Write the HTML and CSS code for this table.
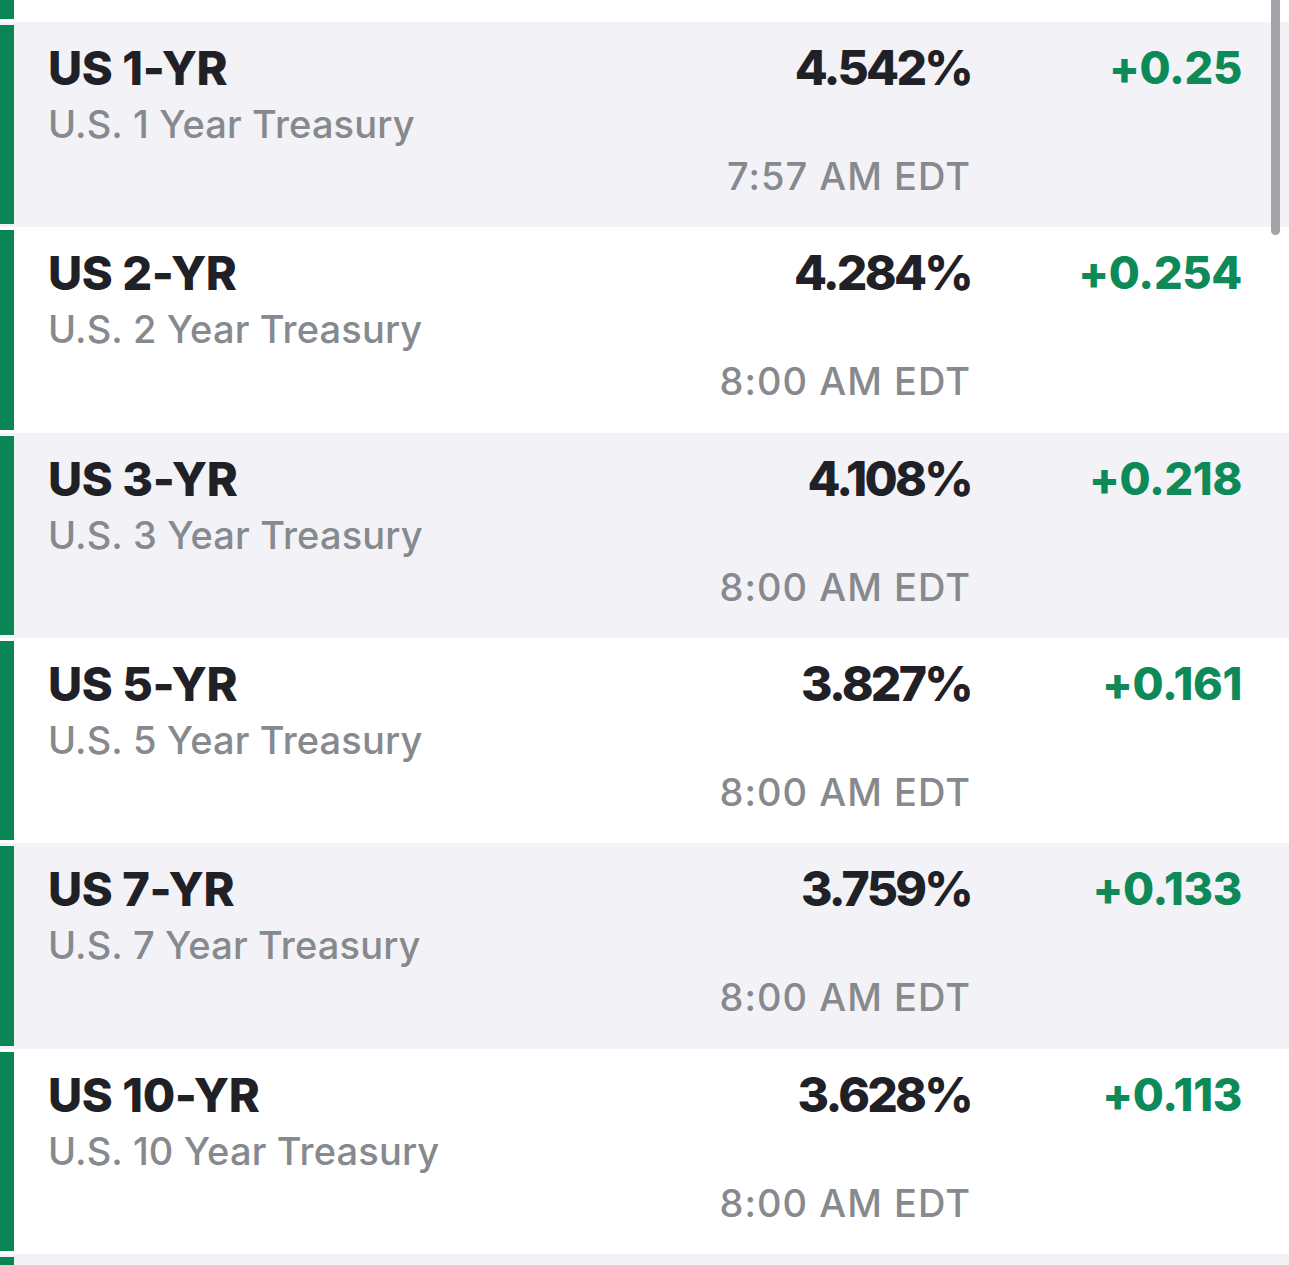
FILE: index.html
```html
<!DOCTYPE html>
<html lang="en">
<head>
<meta charset="utf-8">
<title>US Treasuries</title>
<link rel="stylesheet" href="styles.css">
</head>
<body>
<div class="list">
  <div class="row row-top white"><div class="bar"></div><div class="main"></div></div>
  <div class="row grey">
    <div class="bar"></div>
    <div class="main">
      <div class="name"><div class="sym">US 1-YR</div><div class="desc">U.S. 1 Year Treasury</div></div>
      <div class="quote"><div class="val">4.542%</div><div class="time">7:57 AM EDT</div></div>
      <div class="chg">+0.25</div>
    </div>
  </div>
  <div class="row white">
    <div class="bar"></div>
    <div class="main">
      <div class="name"><div class="sym">US 2-YR</div><div class="desc">U.S. 2 Year Treasury</div></div>
      <div class="quote"><div class="val">4.284%</div><div class="time">8:00 AM EDT</div></div>
      <div class="chg">+0.254</div>
    </div>
  </div>
  <div class="row grey">
    <div class="bar"></div>
    <div class="main">
      <div class="name"><div class="sym">US 3-YR</div><div class="desc">U.S. 3 Year Treasury</div></div>
      <div class="quote"><div class="val">4.108%</div><div class="time">8:00 AM EDT</div></div>
      <div class="chg">+0.218</div>
    </div>
  </div>
  <div class="row white">
    <div class="bar"></div>
    <div class="main">
      <div class="name"><div class="sym">US 5-YR</div><div class="desc">U.S. 5 Year Treasury</div></div>
      <div class="quote"><div class="val">3.827%</div><div class="time">8:00 AM EDT</div></div>
      <div class="chg">+0.161</div>
    </div>
  </div>
  <div class="row grey">
    <div class="bar"></div>
    <div class="main">
      <div class="name"><div class="sym">US 7-YR</div><div class="desc">U.S. 7 Year Treasury</div></div>
      <div class="quote"><div class="val">3.759%</div><div class="time">8:00 AM EDT</div></div>
      <div class="chg">+0.133</div>
    </div>
  </div>
  <div class="row white">
    <div class="bar"></div>
    <div class="main">
      <div class="name"><div class="sym">US 10-YR</div><div class="desc">U.S. 10 Year Treasury</div></div>
      <div class="quote"><div class="val">3.628%</div><div class="time">8:00 AM EDT</div></div>
      <div class="chg">+0.113</div>
    </div>
  </div>
  <div class="row grey"><div class="bar"></div><div class="main"></div></div>
</div>
<div class="scrollbar"></div>
</body>
</html>
```

FILE: styles.css
```css
html, body {
  margin: 0;
  padding: 0;
  background: #ffffff;
  overflow: hidden;
}
body {
  width: 1289px;
  height: 1265px;
  position: relative;
  font-family: "Inter", "Lato", "Liberation Sans", sans-serif;
}
.list {
  display: flex;
  flex-direction: column;
}
.row {
  display: flex;
  height: 205.33px;
  box-sizing: border-box;
  padding: 3px 0;
  flex-shrink: 0;
}
.row-top {
  height: 22px;
  padding-top: 0;
}
.grey { background: #f2f2f7; }
.white { background: #ffffff; }
.row-top .bar { height: 19px; }
.bar {
  width: 14px;
  background: #0b8456;
  flex-shrink: 0;
}
.main {
  flex: 1;
  display: grid;
  grid-template-columns: 1fr auto 272px;
  padding: 15px 47px 0 34px;
  align-items: start;
}
.sym {
  font-size: 47px;
  line-height: 56px;
  font-weight: 800;
  color: #1f2126;
  letter-spacing: -0.4px;
}
.desc {
  font-size: 38px;
  line-height: 52px;
  margin-top: 2px;
  color: #86898d;
  font-weight: 500;
  letter-spacing: 0.15px;
}
.quote {
  display: flex;
  flex-direction: column;
  align-items: flex-end;
}
.val {
  font-size: 48px;
  line-height: 56px;
  font-weight: 800;
  color: #1f2126;
  letter-spacing: -2.7px;
  margin-right: -1px;
}
.time {
  font-size: 38px;
  line-height: 52px;
  margin-top: 54px;
  color: #86898d;
  font-weight: 500;
  letter-spacing: 1px;
  margin-right: -1px;
}
.chg {
  text-align: right;
  font-size: 45px;
  line-height: 56px;
  font-weight: 800;
  color: #0e8a58;
  letter-spacing: -0.3px;
  margin-right: 0;
}
.scrollbar {
  position: absolute;
  left: 1271px;
  top: -10px;
  width: 9px;
  height: 245px;
  border-radius: 5px;
  background: #a3a3a8;
}
```
